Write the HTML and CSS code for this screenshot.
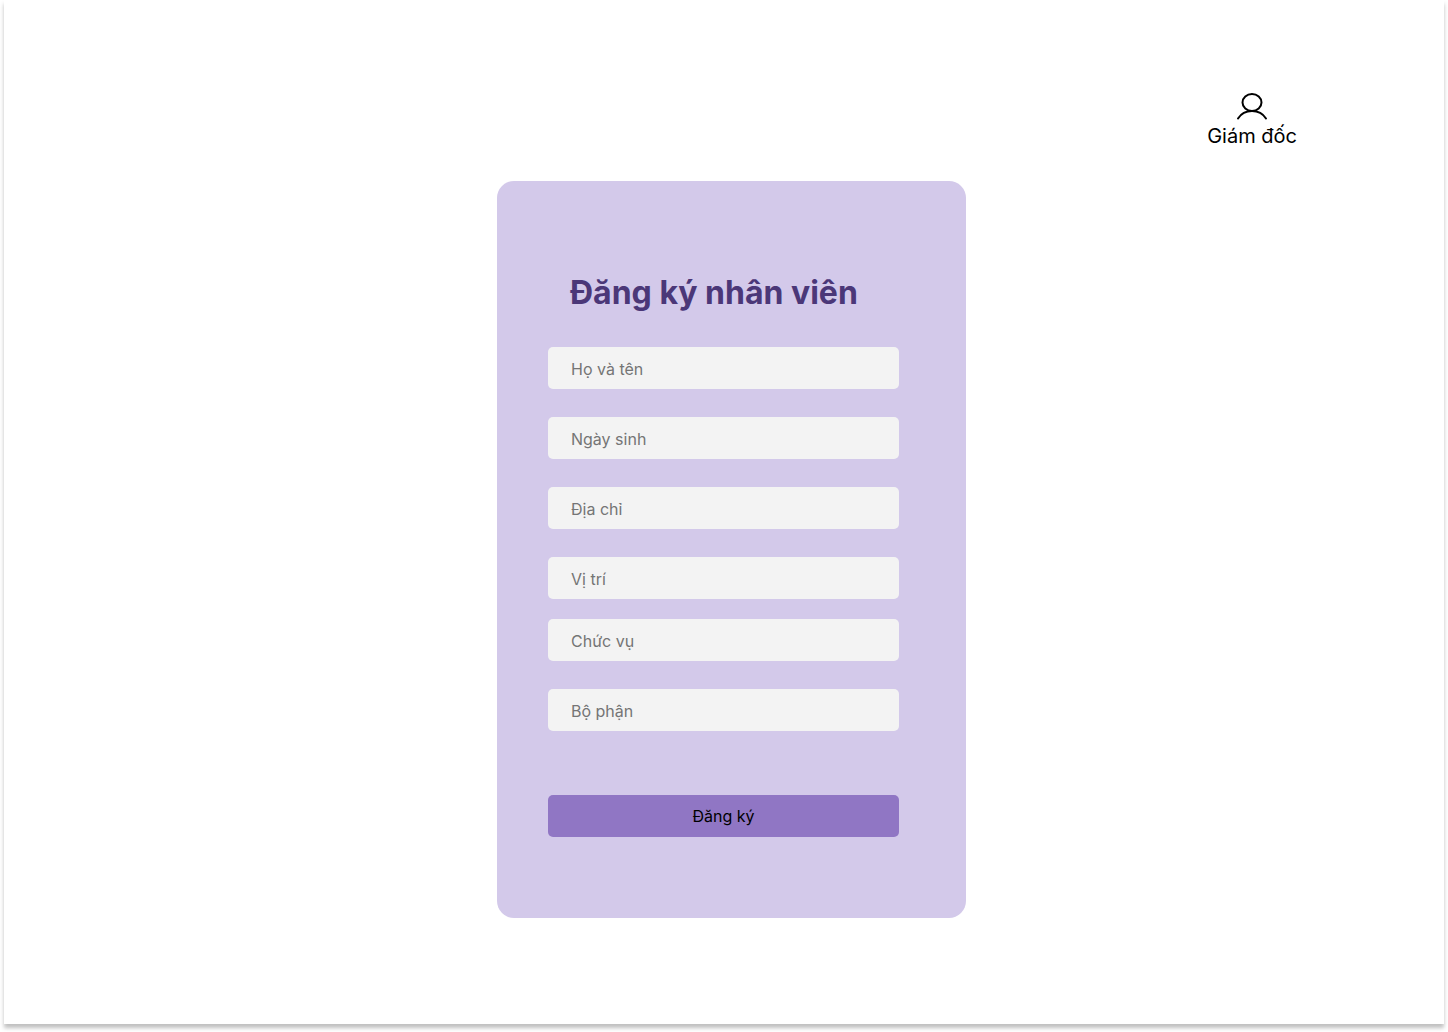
FILE: index.html
```html
<!DOCTYPE html>
<html lang="vi">
<head>
<meta charset="utf-8">
<meta name="viewport" content="width=device-width, initial-scale=1">
<title>Đăng ký nhân viên</title>
<link rel="stylesheet" href="styles.css">
</head>
<body>
<div class="page">
  <header class="topbar">
    <div class="user">
      <svg class="user-icon" viewBox="0 0 32 28" aria-hidden="true">
        <ellipse cx="16" cy="9.500" rx="9.500" ry="8.500"/>
        <path d="M2 25.500C5 20.700 10 18 16 18S27 20.700 30 25.500"/>
      </svg>
      <span class="user-role">Giám đốc</span>
    </div>
  </header>
  <main class="content">
    <form class="card">
      <h1 class="title">Đăng ký nhân viên</h1>
      <div class="group">
        <input class="field" type="text" placeholder="Họ và tên" aria-label="Họ và tên">
        <input class="field" type="text" placeholder="Ngày sinh" aria-label="Ngày sinh">
        <input class="field" type="text" placeholder="Địa chỉ" aria-label="Địa chỉ">
        <input class="field" type="text" placeholder="Vị trí" aria-label="Vị trí">
      </div>
      <div class="group">
        <input class="field" type="text" placeholder="Chức vụ" aria-label="Chức vụ">
        <input class="field" type="text" placeholder="Bộ phận" aria-label="Bộ phận">
      </div>
      <button class="submit" type="submit">Đăng ký</button>
    </form>
  </main>
</div>
</body>
</html>
```
FILE: styles.css
```css
* {
  box-sizing: border-box;
}

body {
  margin: 0;
  padding: 0 4px 8px;
  background: #fff;
  color: #000;
  font-family: Inter, "Liberation Sans", sans-serif;
}

.page {
  min-height: calc(100vh - 8px);
  padding-bottom: 104px;
  background: #fff;
  box-shadow: 0 4px 4px rgba(0, 0, 0, 0.25);
}

.topbar {
  display: flex;
  justify-content: flex-end;
  padding: 93px 147px 32px;
}

.user {
  display: flex;
  flex-direction: column;
  align-items: center;
  gap: 3px;
}

.user-icon {
  width: 32px;
  height: 28px;
  fill: none;
  stroke: #000;
  stroke-width: 2;
  stroke-linecap: round;
}

.user-role {
  font-size: 20px;
  line-height: 25px;
}

.content {
  display: flex;
  justify-content: center;
  padding-left: 15px;
}

.card {
  display: flex;
  flex-direction: column;
  width: 100%;
  max-width: 469px;
  padding: 92px 67px 81px 51px;
  border-radius: 17px;
  background: #d3c9ea;
}

.title {
  margin: 0 0 34px;
  padding-left: 22px;
  color: #4b3778;
  font-size: 32px;
  font-weight: 700;
  line-height: 40px;
}

.group {
  display: flex;
  flex-direction: column;
  gap: 28px;
}

.group + .group {
  margin-top: 20px;
}

.field {
  width: 100%;
  height: 42px;
  padding: 2px 23px 0;
  border: 0;
  border-radius: 5px;
  background: #f3f3f3;
  color: #000;
  font: 16px/20px Inter, "Liberation Sans", sans-serif;
}

.field::placeholder {
  color: #757575;
  opacity: 1;
}

.submit {
  height: 42px;
  margin-top: 64px;
  border: 0;
  border-radius: 5px;
  background: #9076c4;
  color: #000;
  font: 16px/20px Inter, "Liberation Sans", sans-serif;
}
```
